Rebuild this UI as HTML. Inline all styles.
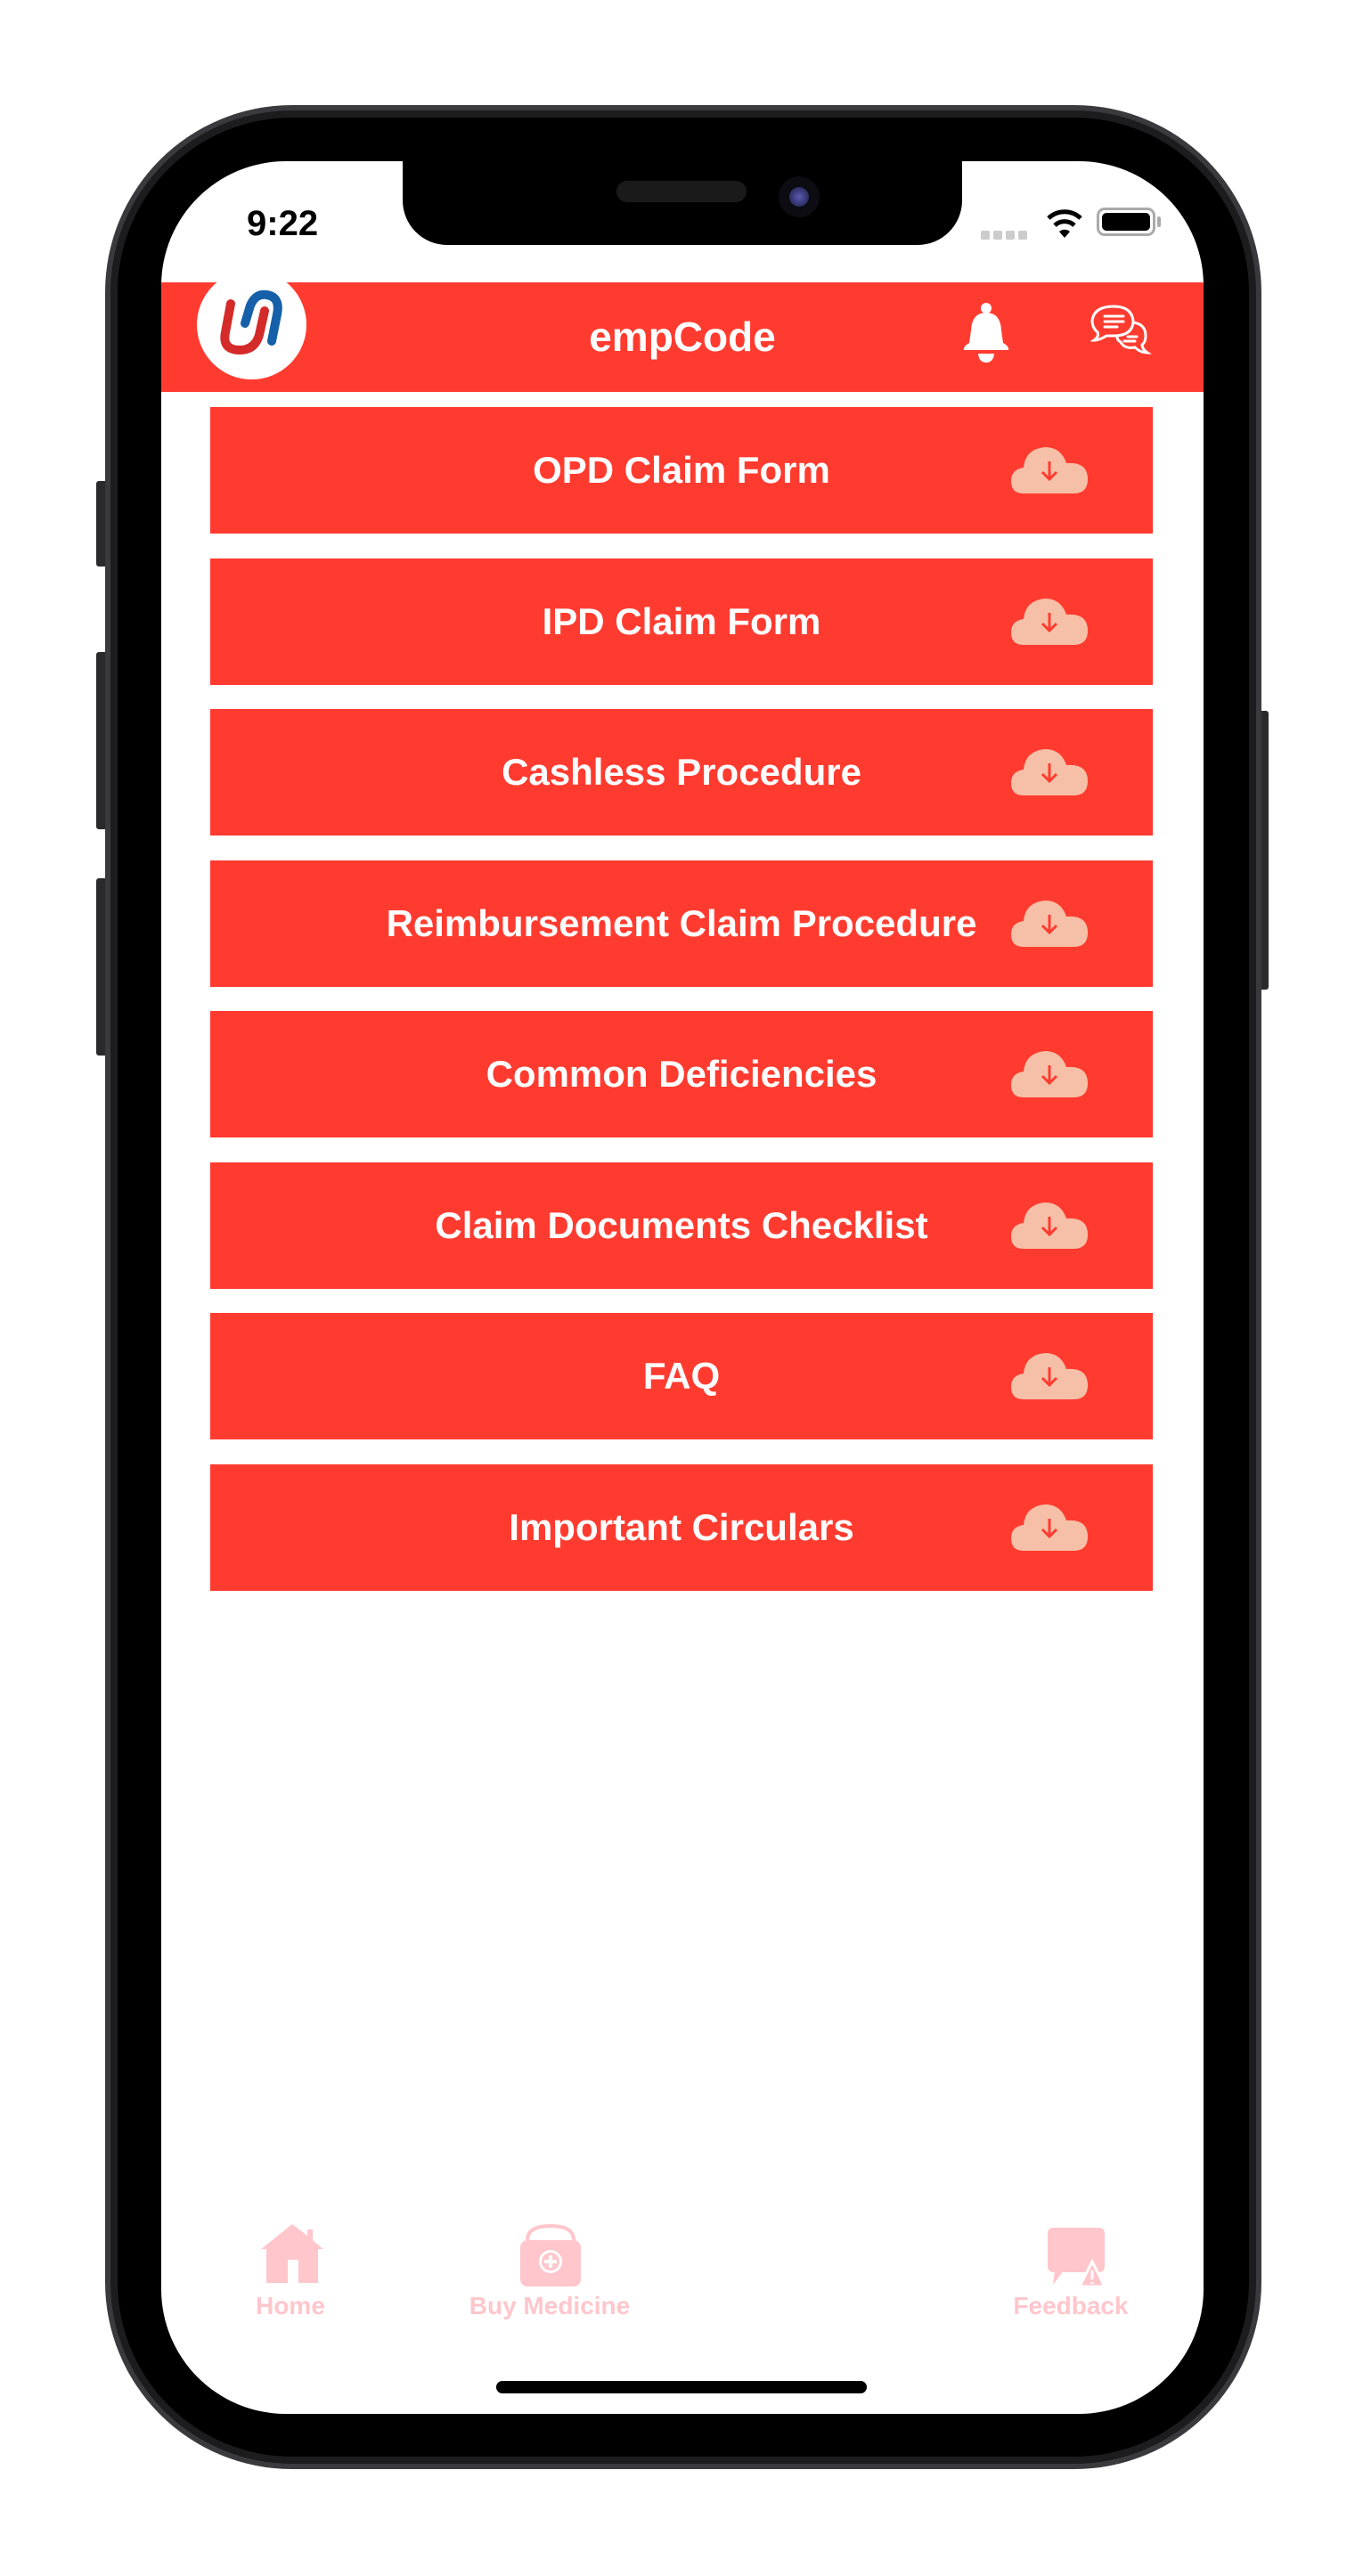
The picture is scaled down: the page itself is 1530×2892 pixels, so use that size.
<!DOCTYPE html>
<html><head><meta charset="utf-8"><style>
*{margin:0;padding:0;box-sizing:border-box}
body{width:1530px;height:2892px;background:#fff;position:relative;overflow:hidden;font-family:"Liberation Sans",sans-serif}
.abs{position:absolute}
.phone{left:118px;top:118px;width:1298px;height:2654px;border-radius:210px;background:#3a3a3e;}
.phone2{left:124px;top:124px;width:1286px;height:2642px;border-radius:204px;background:#1c1c1e}
.bezel{left:132px;top:132px;width:1270px;height:2626px;border-radius:196px;background:#000}
.screen{left:181px;top:181px;width:1170px;height:2529px;border-radius:140px;background:#fff;overflow:hidden}
.btnside{background:#2a2a2d;border-radius:3px}
.notch{left:452px;top:170px;width:628px;height:105px;background:#000;border-radius:0 0 50px 50px}
.hdr{left:0;top:136px;width:1170px;height:123px;background:#ff3b30;overflow:hidden}
.item{left:55px;width:1058px;height:142px;background:#ff3b30;color:#fff;font-weight:bold;font-size:42px;display:flex;align-items:center;justify-content:center}
.cloud{position:absolute;left:899px;top:41px}
.tab{color:#ffc6cc;font-size:28px;font-weight:bold;text-align:center}
</style></head><body>
<div class="abs btnside" style="left:108px;top:540px;width:14px;height:96px"></div>
<div class="abs btnside" style="left:108px;top:732px;width:14px;height:199px"></div>
<div class="abs btnside" style="left:108px;top:986px;width:14px;height:199px"></div>
<div class="abs btnside" style="left:1412px;top:798px;width:12px;height:313px"></div>
<div class="abs phone"></div>
<div class="abs phone2"></div>
<div class="abs bezel"></div>
<div class="abs screen">
  <div class="abs" style="left:96px;top:48px;font-size:40px;font-weight:bold;color:#000">9:22</div>
  <div class="abs" style="left:920px;top:78px;width:52px;height:10px;display:flex;gap:4px">
    <div style="width:10px;height:10px;background:#ccc;border-radius:2px"></div><div style="width:10px;height:10px;background:#ccc;border-radius:2px"></div><div style="width:10px;height:10px;background:#ccc;border-radius:2px"></div><div style="width:10px;height:10px;background:#ccc;border-radius:2px"></div>
  </div>
  <svg class="abs" style="left:994px;top:52px" width="40" height="36" viewBox="0 0 40 36"><path d="M2 12 A26 26 0 0 1 38 12" stroke="#000" stroke-width="5" fill="none"/><path d="M9 20 A16 16 0 0 1 31 20" stroke="#000" stroke-width="5" fill="none"/><path d="M14 27 L20 34 L26 27 A9 9 0 0 0 14 27Z" fill="#000"/></svg>
  <div class="abs" style="left:1050px;top:52px;width:66px;height:32px;border:3px solid #aaa;border-radius:9px;padding:3px"><div style="width:100%;height:100%;background:#000;border-radius:5px"></div></div>
  <div class="abs" style="left:1118px;top:62px;width:4px;height:12px;background:#aaa;border-radius:2px"></div>
  <div class="abs hdr">
    <div class="abs" style="left:40px;top:-14px;width:123px;height:123px;border-radius:50%;background:#fff"></div>
    <svg class="abs" style="left:60px;top:4px" width="85" height="85" viewBox="0 0 85 85">
      <path d="M18 20 L12 52 Q8 72 28 72 Q45 72 50 55 L56 28" stroke="#d42a2a" stroke-width="10" fill="none" stroke-linecap="round"/>
      <path d="M34 42 L40 22 Q46 8 58 10 Q74 12 70 32 L64 62" stroke="#1560a8" stroke-width="10" fill="none" stroke-linecap="round"/>
    </svg>
    <div class="abs" style="left:0;width:1170px;top:34px;text-align:center;color:#fff;font-size:46px;font-weight:bold">empCode</div>
    <svg class="abs" style="left:898px;top:22px" width="56" height="74" viewBox="0 0 56 74"><circle cx="28" cy="7" r="6" fill="#fff"/><path d="M28 12 Q12 12 11 32 L9 46 Q2 50 3 54 L53 54 Q54 50 47 46 L45 32 Q44 12 28 12Z" fill="#fff"/><path d="M19 58 L37 58 Q36 68 28 68 Q20 68 19 58Z" fill="#fff"/></svg>
    <svg class="abs" style="left:1043px;top:25px" width="70" height="70" viewBox="0 0 70 70" fill="none" stroke="#fff" stroke-width="3"><path d="M26 2 Q46 2 48 18 Q48 34 28 35 L18 35 Q10 40 4 40 Q10 36 8 31 Q2 26 2 18 Q4 2 26 2Z"/><path d="M16 13 H37 M16 19 H37 M16 25 H30" stroke-linecap="round"/><path d="M48 20 Q62 22 62 35 Q62 42 58 45 Q58 50 64 54 Q56 54 50 48 Q38 50 34 42 Q30 40 30 36"/><path d="M42 36 H52 M38 41 H50" stroke-linecap="round"/></svg>
  </div>
  <div class="abs item" style="top:276px">OPD Claim Form<svg class="cloud" width="86" height="56" viewBox="0 0 86 56"><path d="M14 56 Q0 56 0 42 Q0 29 14 27 Q16 6 38 4 Q56 4 62 22 Q86 20 86 40 Q86 56 70 56Z" fill="#f6c0a8"/><path d="M43 20 V40 M35 32 L43 40 L51 32" stroke="#ff3b30" stroke-width="3" fill="none"/></svg></div>
  <div class="abs item" style="top:446px">IPD Claim Form<svg class="cloud" width="86" height="56" viewBox="0 0 86 56"><path d="M14 56 Q0 56 0 42 Q0 29 14 27 Q16 6 38 4 Q56 4 62 22 Q86 20 86 40 Q86 56 70 56Z" fill="#f6c0a8"/><path d="M43 20 V40 M35 32 L43 40 L51 32" stroke="#ff3b30" stroke-width="3" fill="none"/></svg></div>
  <div class="abs item" style="top:615px">Cashless Procedure<svg class="cloud" width="86" height="56" viewBox="0 0 86 56"><path d="M14 56 Q0 56 0 42 Q0 29 14 27 Q16 6 38 4 Q56 4 62 22 Q86 20 86 40 Q86 56 70 56Z" fill="#f6c0a8"/><path d="M43 20 V40 M35 32 L43 40 L51 32" stroke="#ff3b30" stroke-width="3" fill="none"/></svg></div>
  <div class="abs item" style="top:785px">Reimbursement Claim Procedure<svg class="cloud" width="86" height="56" viewBox="0 0 86 56"><path d="M14 56 Q0 56 0 42 Q0 29 14 27 Q16 6 38 4 Q56 4 62 22 Q86 20 86 40 Q86 56 70 56Z" fill="#f6c0a8"/><path d="M43 20 V40 M35 32 L43 40 L51 32" stroke="#ff3b30" stroke-width="3" fill="none"/></svg></div>
  <div class="abs item" style="top:954px">Common Deficiencies<svg class="cloud" width="86" height="56" viewBox="0 0 86 56"><path d="M14 56 Q0 56 0 42 Q0 29 14 27 Q16 6 38 4 Q56 4 62 22 Q86 20 86 40 Q86 56 70 56Z" fill="#f6c0a8"/><path d="M43 20 V40 M35 32 L43 40 L51 32" stroke="#ff3b30" stroke-width="3" fill="none"/></svg></div>
  <div class="abs item" style="top:1124px">Claim Documents Checklist<svg class="cloud" width="86" height="56" viewBox="0 0 86 56"><path d="M14 56 Q0 56 0 42 Q0 29 14 27 Q16 6 38 4 Q56 4 62 22 Q86 20 86 40 Q86 56 70 56Z" fill="#f6c0a8"/><path d="M43 20 V40 M35 32 L43 40 L51 32" stroke="#ff3b30" stroke-width="3" fill="none"/></svg></div>
  <div class="abs item" style="top:1293px">FAQ<svg class="cloud" width="86" height="56" viewBox="0 0 86 56"><path d="M14 56 Q0 56 0 42 Q0 29 14 27 Q16 6 38 4 Q56 4 62 22 Q86 20 86 40 Q86 56 70 56Z" fill="#f6c0a8"/><path d="M43 20 V40 M35 32 L43 40 L51 32" stroke="#ff3b30" stroke-width="3" fill="none"/></svg></div>
  <div class="abs item" style="top:1463px">Important Circulars<svg class="cloud" width="86" height="56" viewBox="0 0 86 56"><path d="M14 56 Q0 56 0 42 Q0 29 14 27 Q16 6 38 4 Q56 4 62 22 Q86 20 86 40 Q86 56 70 56Z" fill="#f6c0a8"/><path d="M43 20 V40 M35 32 L43 40 L51 32" stroke="#ff3b30" stroke-width="3" fill="none"/></svg></div>

  <svg class="abs" style="left:112px;top:2316px" width="70" height="68" viewBox="0 0 70 68"><path d="M35 0 L0 28 L6 28 L6 66 L30 66 L30 40 L42 40 L42 66 L64 66 L64 28 L70 28 L58 18 L58 6 L52 6 L52 13Z" fill="#ffc6cc"/></svg>
  <div class="abs tab" style="left:85px;top:2392px;width:120px">Home</div>
  <svg class="abs" style="left:401px;top:2316px" width="72" height="70" viewBox="0 0 72 70"><path d="M10 18 Q10 2 36 2 Q62 2 62 18" stroke="#ffc6cc" stroke-width="4" fill="none"/><rect x="2" y="18" width="68" height="52" rx="8" fill="#ffc6cc"/><circle cx="36" cy="42" r="13" fill="#fff"/><circle cx="36" cy="42" r="10" fill="#ffc6cc"/><path d="M36 35 V49 M29 42 H43" stroke="#fff" stroke-width="4"/></svg>
  <div class="abs tab" style="left:326px;top:2392px;width:220px">Buy Medicine</div>
  <svg class="abs" style="left:993px;top:2318px" width="72" height="70" viewBox="0 0 72 70"><rect x="2" y="2" width="64" height="50" rx="6" fill="#ffc6cc"/><path d="M10 50 L8 66 L20 50Z" fill="#ffc6cc"/><path d="M52 40 L38 68 L66 68Z" fill="#ffc6cc" stroke="#fff" stroke-width="3"/><path d="M52 50 V60 M52 63 V65" stroke="#fff" stroke-width="3"/></svg>
  <div class="abs tab" style="left:931px;top:2392px;width:180px">Feedback</div>
  <div class="abs" style="left:376px;top:2492px;width:416px;height:14px;background:#000;border-radius:7px"></div>
</div>
<div class="abs notch"></div>
<div class="abs" style="left:692px;top:203px;width:146px;height:24px;background:#1a1a1a;border-radius:12px"></div>
<div class="abs" style="left:874px;top:198px;width:46px;height:46px;background:#0c0c12;border-radius:50%"></div>
<div class="abs" style="left:886px;top:210px;width:22px;height:22px;background:radial-gradient(circle,#5a5ab0,#1a1a40);border-radius:50%"></div>
</body></html>
